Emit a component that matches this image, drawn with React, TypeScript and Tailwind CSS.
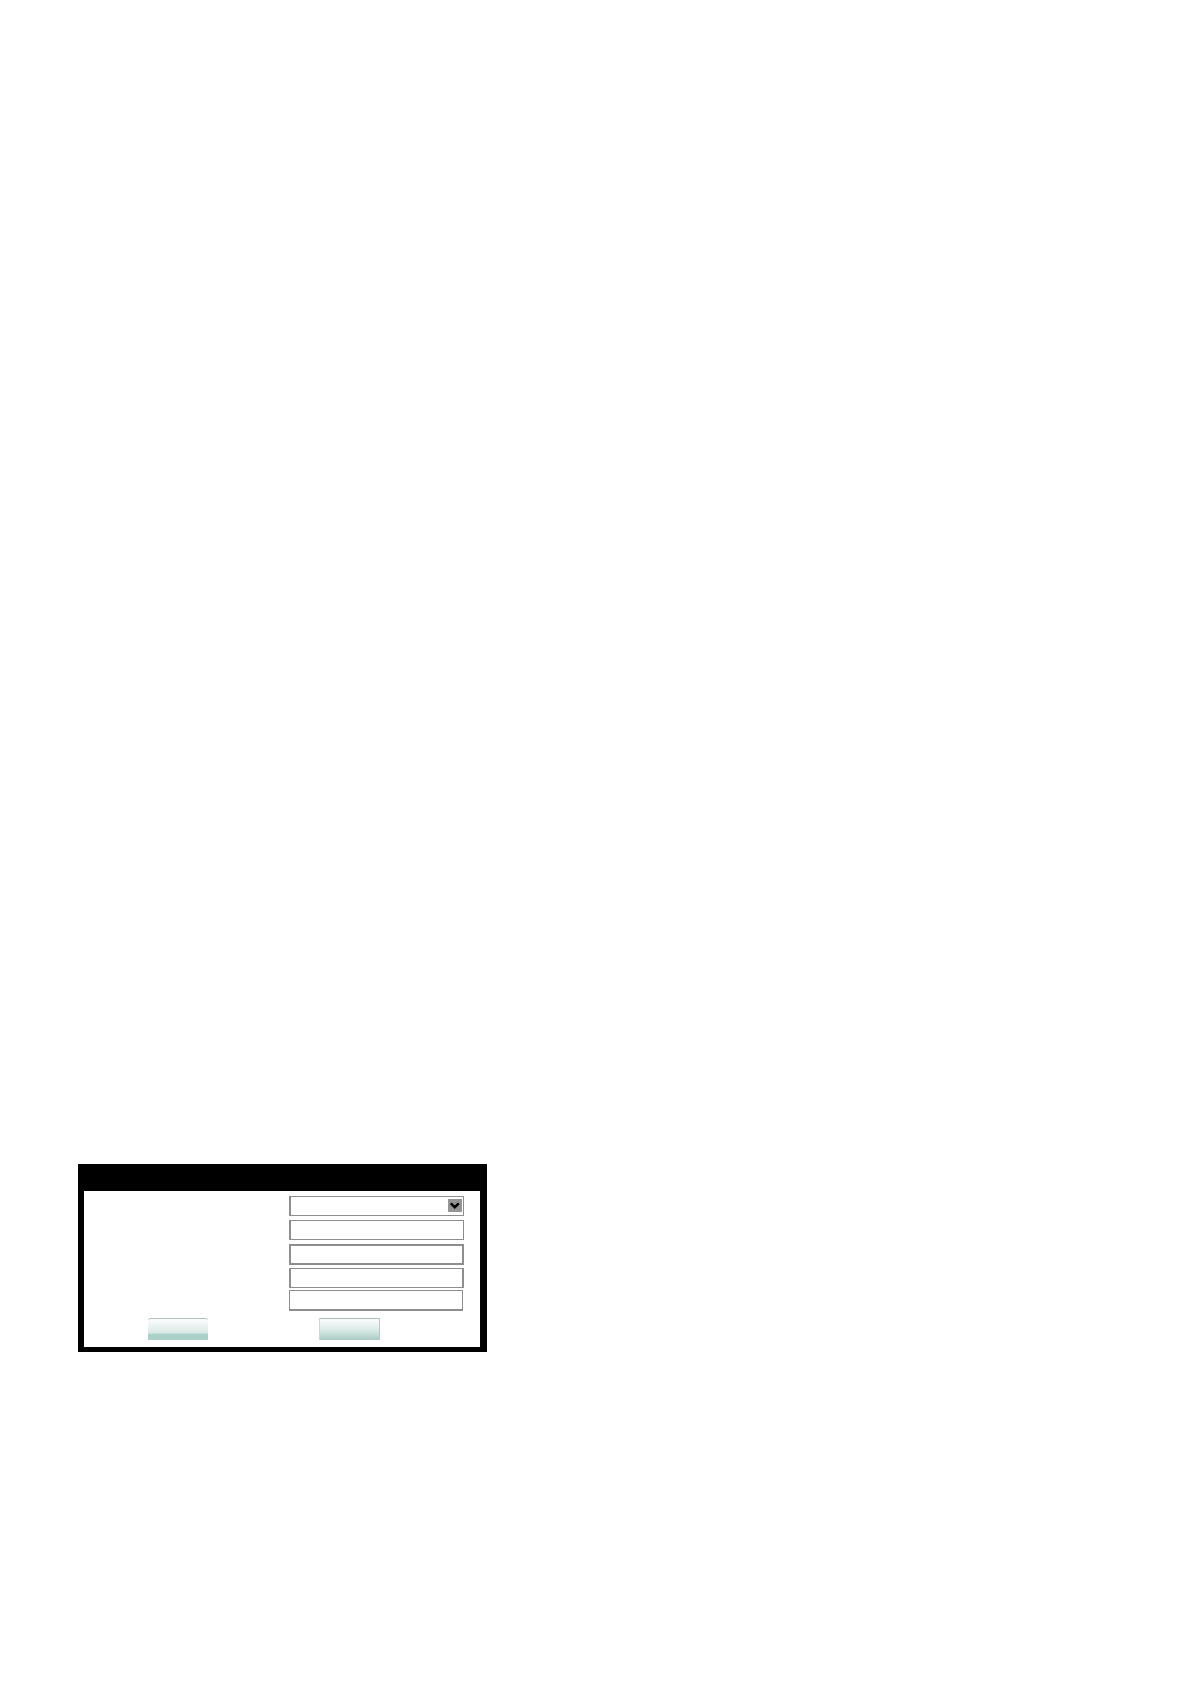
import React from "react";

const textFields = [
  { label: "Second field", style: "mt-1 h-5 border border-l-2" },
  { label: "Third field", style: "mt-1 h-[21px] border-2" },
  { label: "Fourth field", style: "mt-[3px] h-5 border border-x-2" },
  { label: "Fifth field", style: "mt-0.5 mr-px h-[21px] border border-b-2" },
];

function SelectField() {
  return (
    <div className="relative h-5">
      <select
        aria-label="First field"
        className="block h-5 w-full appearance-none border border-l-2 border-[#8e8e8e] bg-white outline-none"
      />
      <svg
        aria-hidden="true"
        viewBox="0 0 14 13"
        className="pointer-events-none absolute top-[3px] right-0.5 h-[13px] w-3.5 bg-[#959595]"
      >
        <path d="M2.8 4.4 L6.8 8.3 L10.8 4.4" fill="none" stroke="#000" strokeWidth="2.6" />
      </svg>
    </div>
  );
}

export default function App() {
  return (
    <main className="min-h-screen bg-white px-[78px] pt-[1164px] font-['Liberation_Sans',sans-serif]">
      <form
        className="w-full max-w-[409px] border-t-[27px] border-r-[7px] border-b-[5px] border-l-[6px] border-black bg-white pt-[5px] pb-[7px]"
        onSubmit={(e) => e.preventDefault()}
      >
        <div className="mr-4 ml-[205px] flex flex-col">
          <SelectField />
          {textFields.map((field) => (
            <input
              key={field.label}
              type="text"
              aria-label={field.label}
              className={`block min-w-0 border-[#8e8e8e] bg-white px-1 text-xs outline-none ${field.style}`}
            />
          ))}
        </div>
        <div className="mt-[7px] flex gap-[111px] pl-16">
          <button
            type="submit"
            aria-label="Confirm"
            className="h-[22px] w-[60px] rounded-t-[3px] border-t border-t-[#b4bfbd] bg-linear-to-b from-[#fafcfc] from-5% via-[#dae9e6] via-65% to-[#abd0c9] to-75%"
          />
          <button
            type="button"
            aria-label="Cancel"
            className="h-[22px] w-[61px] rounded-[1px] border border-t-[#b0bcb9] border-r-[#bac8c5] border-b-[#b2cbc6] border-l-[#cbd9d6] bg-linear-to-b from-[#f8fbfb] from-5% via-[#dbeae7] via-55% to-[#adcfc8]"
          />
        </div>
      </form>
    </main>
  );
}
